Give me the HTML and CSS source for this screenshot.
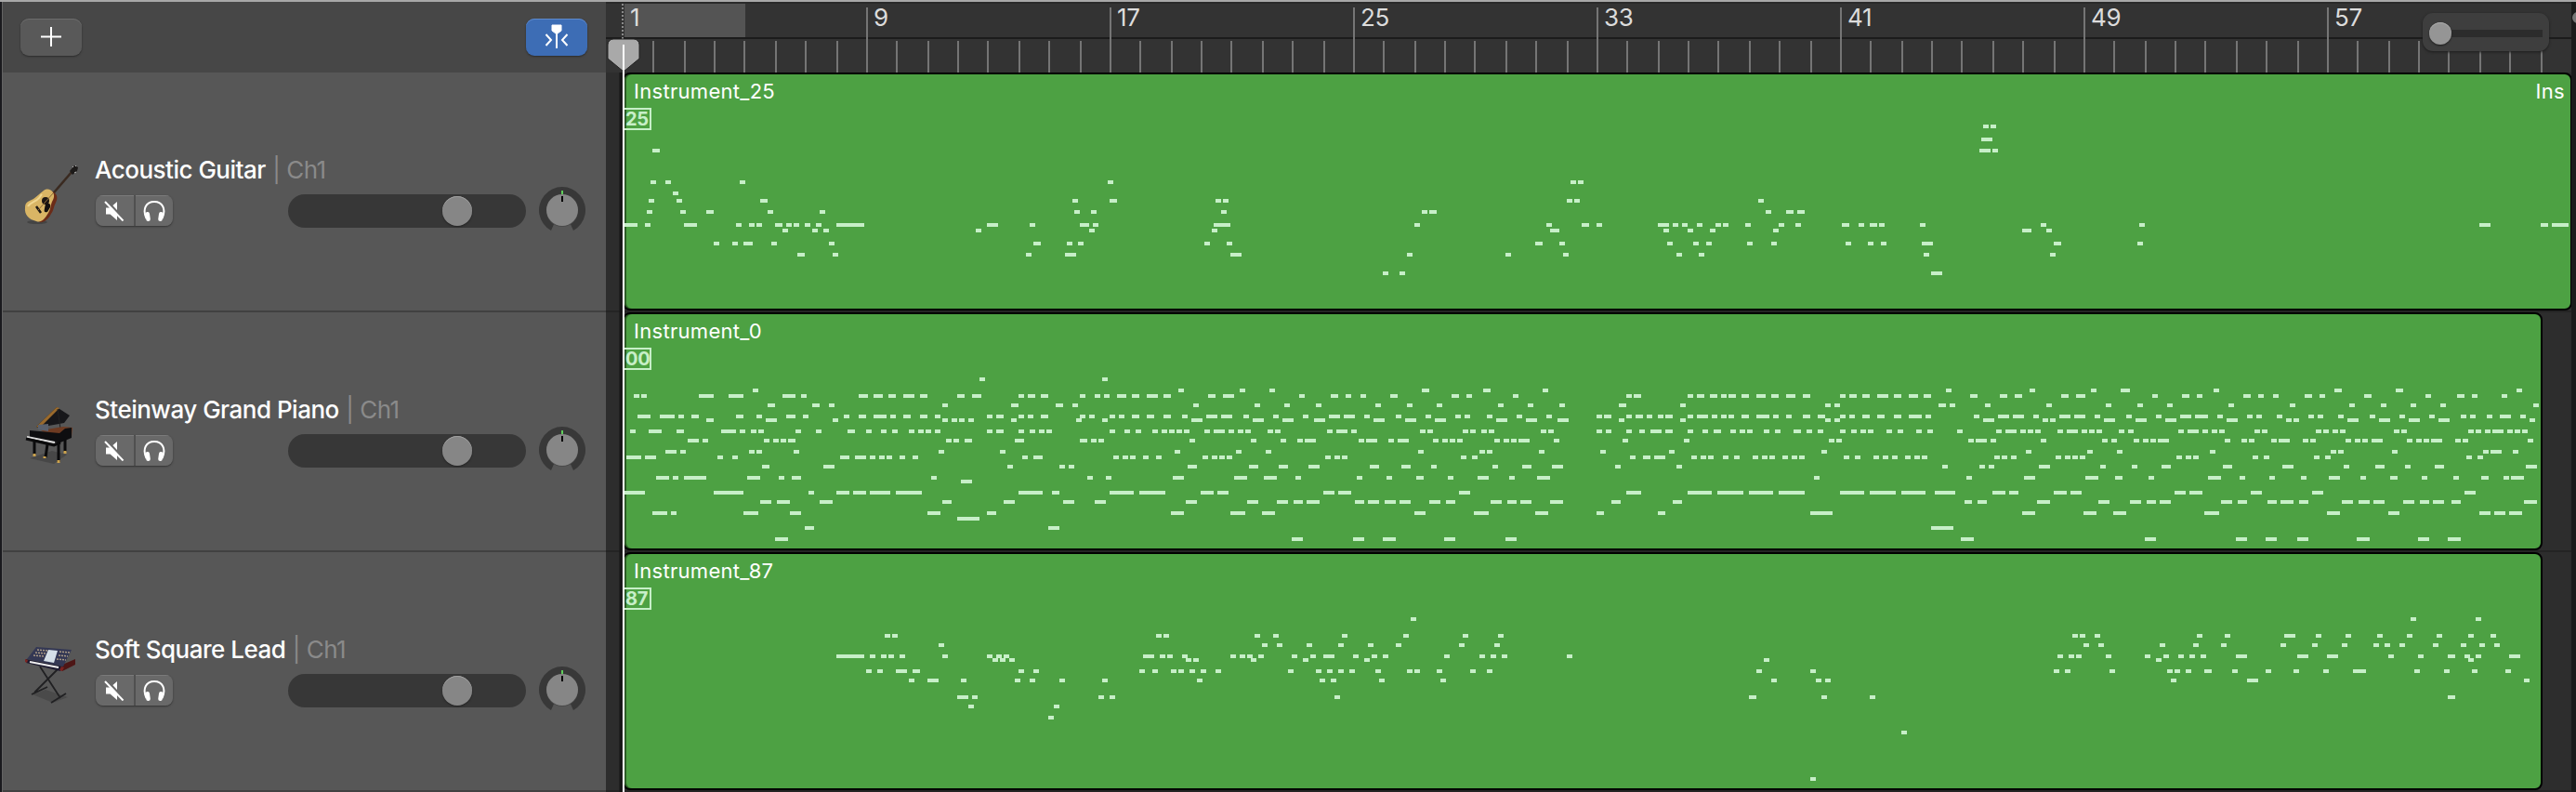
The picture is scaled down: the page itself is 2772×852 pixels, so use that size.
FILE: index.html
```html
<!DOCTYPE html>
<html lang="en">
    <head>
        <meta charset="UTF-8">
        <title>Tracks</title>
        <link rel="stylesheet" href="styles.css">
    </head>
    <body>
        <svg class="defs" width="0" height="0">
            <symbol id="mute" viewBox="0 0 22 22">
                <path d="M2 7.5h4.5L14 1v20l-7.500-6.500H2z" fill="#fff"/>
                <path d="M2.500-.5l19 20.500" stroke="#696969" stroke-width="2.500"/>
                <path d="M1 1l19.500 20.500" stroke="#fff" stroke-width="2"/>
            </symbol>
            <symbol id="phones" viewBox="0 0 24 24">
                <path d="M3.500 20C-1 10 3 2 12 2s13 8 8.500 18" fill="none" stroke="#fff" stroke-width="2"/>
                <rect x="2.800" y="13" width="4.600" height="10" rx="2.200" fill="#fff" transform="rotate(-8 5 18)"/>
                <rect x="16.600" y="13" width="4.600" height="10" rx="2.200" fill="#fff" transform="rotate(8 19 18)"/>
            </symbol>
            <symbol id="pan" viewBox="0 0 50 48">
                <path d="M13 47A25 25 0 1 1 37 47L33 38H17z" fill="#383838"/>
                <path d="M17 38h16l3 10H14z" fill="#575757"/>
                <circle cx="25" cy="26" r="17" fill="#4a4a4a"/>
                <circle cx="25" cy="25" r="17" fill="#868686"/>
                <path d="M25 4v4" stroke="#5fce5a" stroke-width="2"/>
                <path d="M25 10v6" stroke="#000" stroke-width="2"/>
            </symbol>
        </svg>
        <div class="app">
            <div class="panel">
                <div class="toolbar">
                    <button class="btn">
                        <svg width="22" height="22"><path d="M11 0v21M0 10.500h22" stroke="#fff" stroke-width="2"/></svg>
                    </button>
                    <button class="btn active">
                        <svg width="26" height="28" fill="none" stroke="#fff" stroke-width="2">
                            <path d="M8 1h10v6l-4 3h-2l-4-3z" fill="#fff" stroke-width="1"/>
                            <path d="M13 8v18M1.500 11l5.500 6-5.500 6M24.500 11L19 17l5.500 6"/>
                        </svg>
                    </button>
                </div>
                <div class="track">
                    <svg class="instrument" viewBox="0 0 64 70">
                        <ellipse cx="17" cy="64" rx="11" ry="2" fill="#444"/>
                        <path d="M30 38L55 9" stroke="#3a2a20" stroke-width="2.600"/>
                        <path d="M52 9l5-6 4 2-1 4-5 4z" fill="#1c1a19"/>
                        <path d="M55 5l1-1M58 3l1 1M57 11l2-1" stroke="#bbb"/>
                        <path d="M33 31c5 2 7 6 4 12s-2 8-5 12c-3 6-8 10-13 9z" fill="#6b2c18"/>
                        <path d="M24 30c4-3 8-1 10 2s1 7-1 10c-2 5-1 7-4 12-4 7-8 11-13 9C8 61 3 56 4 48c0-6 5-7 9-9 4-3 7-6 11-9z" fill="#d9b565"/>
                        <path d="M7 47c3-5 9-5 12-9l3-4" fill="none" stroke="#f0d792" stroke-width="2"/>
                        <circle cx="26" cy="41" r="4" fill="#1d1714"/>
                        <path d="M26 44c4-1 6 0 5 4l-3 5c-3 1-4 0-3-4z" fill="#15110f"/>
                        <path d="M16 47l5 7" stroke="#1d1714" stroke-width="2.500"/>
                        <path d="M18 51L34 33" stroke="#8c6a38"/>
                    </svg>
                    <div class="info">
                        <div class="name">Acoustic Guitar <span>| Ch1</span></div>
                        <div class="controls">
                            <div class="toggles">
                                <button><svg width="22" height="22"><use href="#mute"/></svg></button>
                                <button><svg width="24" height="24"><use href="#phones"/></svg></button>
                            </div>
                            <div class="volume"><i></i></div>
                            <svg class="pan" width="50" height="48"><use href="#pan"/></svg>
                        </div>
                    </div>
                </div>
                <div class="track">
                    <svg class="instrument" viewBox="0 0 64 70">
                        <path d="M9 60l24-8 16 4-14 10z" fill="#474747"/>
                        <path d="M16 26L38 5l14 9-6 8-28 5z" fill="#17171a"/>
                        <path d="M16 26L38 5l3 1-21 21z" fill="#9a6a2c"/>
                        <path d="M39 7l3 21" stroke="#222"/>
                        <path d="M21 30l24-4 10 1-1 10-12 3z" fill="#6e3b22"/>
                        <path d="M18 24l11-1v8l-11-2z" fill="#5b616d"/>
                        <path d="M9 30l32 3 6-5 7-1v11l-12 5-27-1-6-5z" fill="#0e0e10"/>
                        <path d="M6 37l30 6" stroke="#dcdcdc" stroke-width="2"/>
                        <path d="M5 39l30 7 7-3" stroke="#0a0a0b" stroke-width="3" fill="none"/>
                        <path d="M14 42v14M40 44v20M28 45l-2 14M47 40v13" stroke="#0b0b0c" stroke-width="3"/>
                        <path d="M14 55v3M40 62v3M25 58v2M47 52v3" stroke="#cba24d" stroke-width="3"/>
                    </svg>
                    <div class="info">
                        <div class="name">Steinway Grand Piano <span>| Ch1</span></div>
                        <div class="controls">
                            <div class="toggles">
                                <button><svg width="22" height="22"><use href="#mute"/></svg></button>
                                <button><svg width="24" height="24"><use href="#phones"/></svg></button>
                            </div>
                            <div class="volume"><i></i></div>
                            <svg class="pan" width="50" height="48"><use href="#pan"/></svg>
                        </div>
                    </div>
                </div>
                <div class="track">
                    <svg class="instrument" viewBox="0 0 64 70">
                        <path d="M12 56l14-5 24 8-16 6z" fill="#4a4a4a"/>
                        <path d="M20 26l22 34M40 28L14 54M11 56l17-8M32 65l16-10" stroke="#202022" stroke-width="1.800" fill="none"/>
                        <path d="M44 24l14-6v6l-14 7z" fill="#4d1616"/>
                        <path d="M16 5l38 3-9 18-39-8z" fill="#343854"/>
                        <path d="M17 8l11 1M15 11l12 1M13 14l11 1M41 10l11 1M40 14l10 1M38 18l10 1" stroke="#a99a86" stroke-width="1.500" stroke-dasharray="2 1"/>
                        <path d="M29 8l10 1-4 13-11-2z" fill="#d5e0e8"/>
                        <path d="M5 18l40 8-3 5L5 22z" fill="#1d1b30"/>
                        <path d="M9 21l31 6" stroke="#eee" stroke-width="2"/>
                        <path d="M4 18l3 1-1 3-2-1zM43 26l3 1-2 4-3-1z" fill="#7c2320"/>
                    </svg>
                    <div class="info">
                        <div class="name">Soft Square Lead <span>| Ch1</span></div>
                        <div class="controls">
                            <div class="toggles">
                                <button><svg width="22" height="22"><use href="#mute"/></svg></button>
                                <button><svg width="24" height="24"><use href="#phones"/></svg></button>
                            </div>
                            <div class="volume"><i></i></div>
                            <svg class="pan" width="50" height="48"><use href="#pan"/></svg>
                        </div>
                    </div>
                </div>
            </div>
            <div class="timeline">
                <div class="ruler">
                    <div class="cycle"></div>
                    <svg id="ticks" width="2120" height="76"></svg>
                    <div class="numbers">
                        <span>1</span><span>9</span><span>17</span><span>25</span><span>33</span><span>41</span><span>49</span><span>57</span>
                    </div>
                    <div class="zoom"><i></i></div>
                </div>
                <div class="lane">
                    <div class="region long">
                        <div class="title"><span>Instrument_25</span><span class="loop">Ins</span></div>
                        <div class="patch">25</div>
                        <svg class="notes" id="guitar" viewBox="0 0 1047 126"></svg>
                    </div>
                </div>
                <div class="lane">
                    <div class="region">
                        <div class="title"><span>Instrument_0</span></div>
                        <div class="patch">00</div>
                        <svg class="notes" id="piano" viewBox="0 0 1047 126"></svg>
                    </div>
                </div>
                <div class="lane">
                    <div class="region">
                        <div class="title"><span>Instrument_87</span></div>
                        <div class="patch">87</div>
                        <svg class="notes" id="lead" viewBox="0 0 1047 126"></svg>
                    </div>
                </div>
                <div class="edge"><i></i></div>
                <svg class="playhead" width="38" height="850">
                    <path d="M18 2v40" stroke="#8a8a8a" stroke-width="2" stroke-dasharray="2 2"/>
                    <path d="M16 76v774" stroke="#161616" stroke-width="3"/>
                    <path d="M2 46a6 6 0 0 1 6-6h22a6 6 0 0 1 6 6v15L19 75 2 61z" fill="#a9a9a9" stroke="#222" stroke-width="1"/>
                    <path d="M19 46v804" stroke="#fff" stroke-width="2"/>
                </svg>
            </div>
        </div>
        <script src="script.js"></script>
    </body>
</html>
```
FILE: styles.css
```css
* {
    box-sizing: border-box;
}

body {
    margin: 0;
    background: #1a1a1e;
    font-family: Inter, "Liberation Sans", sans-serif;
    color: #fff;
    overflow: hidden;
}

button {
    border: 0;
    padding: 0;
    display: flex;
    align-items: center;
    justify-content: center;
}

.defs {
    position: absolute;
}

.app {
    display: flex;
    width: 2772px;
    height: 852px;
    border-top: 2px solid #a8a8a8;
    padding-left: 2px;
}

.panel {
    width: 650px;
    background: #575757;
    border-left: 1px solid #636363;
}

.toolbar {
    height: 76px;
    background: #474747;
    display: flex;
    justify-content: space-between;
    padding: 18px 20px 0 19px;
}

.btn {
    width: 66px;
    height: 40px;
    border-radius: 9px;
    background: #595959;
    box-shadow: inset 0 1px #6c6c6c, 0 1px 2px #2c2c2c;
}

.btn.active {
    background: #3d6db5;
    box-shadow: inset 0 1px #5f8acb, 0 1px 2px #2c2c2c;
}

.track {
    height: 258px;
    border-bottom: 2px solid #414141;
    display: flex;
    padding: 89px 22px 0 20px;
}

.instrument {
    width: 64px;
    height: 70px;
    margin: 8px 15px 0 0;
}

.info {
    flex: 1;
}

.name {
    font-size: 26px;
    line-height: 32px;
    font-weight: 500;
    letter-spacing: -0.5px;
    white-space: pre;
}

.name span {
    color: #8a8a8a;
    font-weight: 400;
    margin-left: 1px;
}

.controls {
    display: flex;
    align-items: center;
    margin-top: 2px;
    height: 48px;
}

.toggles {
    display: flex;
    width: 83px;
    height: 33px;
    gap: 2px;
    margin: 3px 0 0 1px;
    border-radius: 8px;
    overflow: hidden;
    background: #505050;
    box-shadow: 0 1px 2px #333;
}

.toggles button {
    flex: 1;
    background: #696969;
    box-shadow: inset 0 1px #7b7b7b;
}

.volume {
    width: 256px;
    height: 36px;
    margin: 3px 0 0 124px;
    border-radius: 18px;
    background: #373737;
    padding: 2px 58px 2px 166px;
}

.volume i {
    display: block;
    width: 32px;
    height: 32px;
    border-radius: 50%;
    background: #868686;
    box-shadow: inset 0 1px #a0a0a0, 0 1px 2px #222;
}

.pan {
    margin-left: 14px;
}

.timeline {
    position: relative;
    width: 2120px;
    background: #2d2d2d;
}

.ruler {
    position: relative;
    height: 76px;
    background: #333;
    border-top: 2px solid #2a2a2a;
}

.cycle {
    width: 130px;
    height: 36px;
    margin-left: 20px;
    background: #545454;
}

#ticks {
    position: absolute;
    top: -2px;
    left: 0;
}

.numbers {
    position: absolute;
    top: -1px;
    left: 26px;
    display: flex;
}

.numbers span {
    width: 262px;
    font-size: 26px;
    line-height: 32px;
    letter-spacing: -0.3px;
    color: #dcdcdc;
}

.zoom {
    position: absolute;
    top: 10px;
    left: 1955px;
    width: 136px;
    height: 41px;
    padding: 10px 7px;
    border-radius: 11px;
    background: linear-gradient(#2c2c2c, #2c2c2c) 10px 18px / 119px 8px no-repeat #3e3e3e;
    box-shadow: 0 1px 3px #1c1c1c;
}

.zoom i {
    display: block;
    width: 24px;
    height: 24px;
    border-radius: 50%;
    background: #959595;
    box-shadow: inset 0 1px #ababab, 0 1px 2px #1c1c1c;
}

.lane {
    height: 258px;
    padding-left: 18px;
    border-bottom: 2px solid #242424;
}

.region {
    position: relative;
    width: 2066px;
    height: 256px;
    border: 2px solid #000;
    border-radius: 8px;
    background: #4da143;
    box-shadow: inset 2px 0 #2c5c26;
    overflow: hidden;
}

.region.long {
    width: 2098px;
}

.title {
    display: flex;
    justify-content: space-between;
    padding: 4px 6px 0 10px;
    height: 36px;
    font-size: 22px;
    line-height: 28px;
    letter-spacing: 0.3px;
}

.patch {
    width: 29px;
    height: 24px;
    border: 2px solid #c7efc8;
    border-left: 0;
    font-size: 20px;
    line-height: 20px;
    font-weight: 700;
    letter-spacing: -0.3px;
    text-indent: 1px;
    color: #c7efc8;
}

.notes {
    position: absolute;
    top: 0;
    left: 0;
    width: 2094px;
    height: 252px;
    fill: #c7efc8;
    shape-rendering: crispEdges;
}

.edge {
    position: absolute;
    top: 0;
    right: 0;
    width: 5px;
    height: 850px;
    background: #1b1b1b;
    overflow: hidden;
}

.edge i {
    display: block;
    width: 12px;
    height: 12px;
    margin: 11px 0 0 1px;
    border-radius: 50%;
    background: #777;
}

.playhead {
    position: absolute;
    top: 0;
    left: 0;
}
```
FILE: script.js
```js
// one line per pitch, "y: x x+w ..." in points, width is 3 when left out
const guitar = `
27: 731 735
34: 730+6
40: 15+4 729+6 736
57: 14 22 62 260 509 513
63: 26
67: 13 28 73+4 241 261+4 318 322 507 511 610
73: 12 30 44+4 77 105 242 251 321 429 433+4 614 625+4 631+4
80: 0+7 11 32+7 60 67 71 81+4 87 91 97 103 114+15 195+6 218 245+5 252 317+9 425 496 515+4 523 556+6 564 569 577 587 591 603 621 630 655+4 664 670+4 675 697 762 815 998+6 1031+4 1037+9
83: 85 101 107 189 250 316 498+5 559 572 584 618 752+5 765
90: 48 58 64+5 79 110 220+4 238 244 312 324 490+4 503 561 575 582 604 617 657 669 676 698+6 769+4 814
96: 93+4 112 216 237+6 326+6 421 474 505 566 578 699 767
106: 408 417 703+6`;

const piano = `
34: 191 257
40: 69 298 331 347 429+4 462+4 494 711 756 789 805+5 855 920+4 953+4 1018
43: 5 9 40+8 56+8 85+7 95 126+5 134+5 142+4 150+6 159+4 179+4 187+5 212 217+4 224+4 245 253 258 265+5 273+4 281+6 290+4 314+4 322+6 363 380+4 388 396 412+4 445+4 453 478 539 543+4 572 577+4 584+4 590 594+4 601+4 609+5 617+4 625+5 634+4 654 659+4 666+4 674+6 683+4 691+5 699+4 724+4 740+4 748+4 773+4 781+5 822 838+4 846 871+4 879 887 904+4 912 936+4 969 986+4 994 1010
48: 77+4 101+4 110 171 208+4 232+4 241 306 339 355 372 404 421 437 470 486 503 535+4 568 646 651 707+4 713 732 765 797 814 830 863 896 928 945 961 977 1027
54: 7+7 19+8 29 36+4 60+4 71 87+5 96 118 126+4 134+7 143 150+4 159+4 167 195 200+4 212 217 224+4 245 250 261 266 273+4 281+4 290+4 300 313+6 321+6 333 349 365 379+6 387+6 398 415 431 447 452 464 480 496 523 527+4 539 544+4 550 556 560+4 572 577+6 585 590 594 601+4 609+7 618 625 634+4 642+4 654 659 666+4 674+4 683+4 691+7 700 726 739+6 747+6 758 772+6 780+6 791 808 824 837+6 845+7 857 873 878 889 906 911 922 939 955 971 988 993 1002 1009+6 1020
56: 44+4 76+6 112 171 176 180 185 208 243 257 305+6 338+6 354+6 371+6 403+6 420+6 436+6 469+6 485+6 502+6 535 568 646 651 731+6 763 767 796+6 813+6 829+6 862+6 894 898 927+6 944+6 960+6 976+6 1025
62: 3 13+7 28+4 52+8 62 68 72 92 103 120+4 130 138 144 153 158 162 167 195 200+4 212 218 223 227 261 269 275 284 289 293 297 301 312 317+6 325 330 334 346 350 378 383+6 391 428 432 451 455 461 465 493 497 523 528 539 546 552+6 560+4 572 580 586+4 595 600 604 613 619 629+4 636 642 654 660 665 669 679 685 695 701 717 738 743+6 751 755 759 771 776+6 784 788 792 804 809 836 841+6 849 854 858 877 881 910 914 919 923 952 956 992 996 1001 1005+6 1013 1017 1021
67: 34+6 42 75 80 84 88+4 173 177 183+4 210+5 245+4 251 255 304 337 353 362 366+6 395 399+6 411 416+6 435 440 444 448 468 473 477 481+6 500 537 570 648 652 723 727+6 735 762 795 800 812 817 821 825+6 861 870 874 886 890+6 903 907 926 931 935 940+6 959 964 968 972+6 985 989 1024
73: 22+6 30 67 71 91 169 202 296 329 345 427 460 464 492 525 562 644 754 787 803 853 918 922 951 1000 1004+6 1016
76: 1+8 11+6 50 58 116+5 124+6 132 137 141 148 155 214 220+5 263 268 272 279 286 311 316 320 324 377 382 386 450 456 541 548+4 554+6 574 579 583 591 597 607 612 616 623 628 632 656 662 672 677 682 689 694 698 737 741 746 770 775 779 783 835 840 844 876 882 909 915 991 997
81: 74+4 107+6 206 234 239 303+5 336+5 352+5 368+6 401+5 418+5 434 467 483+5 499+6 533 566 709 729 734 761+6 794 811 827+5 860+5 892+6 925 942+5 958 974+5 1023+6
87: 17+7 26 32+12 66+7 83 90+5 165 249 259 295+6 328+7 344+7 361 394 410 426+4 443 459+6 476 491+7 640 722 753+6 786+7 802+4 820 852+7 869 885 902 917+6 934 950+4 967 984 999+4 1011 1015+7
89: 181+6
95: 0+11 48+16 99 114+7 123+7 132+11 146+14 212+13 230+4 261+13 277+14 310+7 319+6 376+6 384+7 449+6 539+8 572+13 588+14 605+13 621+14 654+13 670+14 687+13 705+11 736+7 745+5 769+7 778+6 834+6 842+7 875+6 908+6 990+6
100: 73+6 82+7 105+7 171+5 204+6 236+6 253+6 302+6 335+6 351+6 360+5 367+7 393+5 400+6 409+6 417+6 433+6 442+5 466+6 475+5 482+6 498+7 531+5 564+5 721+4 728+5 760+7 793+6 810+6 819+5 826+6 859+6 868+5 884+5 891+7 901+5 924+6 933+6 941+6 957+6 966+5 973+6 983+5 1022+7
106: 15+8 25 64+8 89+6 163+7 195+5 294+7 326+8 343+7 425+6 457+8 490+7 523+4 556+4 638+12 752+7 785+7 801+7 850+8 916+7 949+6 998+6 1006+6 1014+7
109: 179+12
114: 97+5 228+6 703+12
120: 81+7 359+6 392+6 408+7 441+6 474+6 719+7 818+6 867+6 883+6 900+6 932+7 965+6 981+7`;

const lead = `
34: 423 961 996
43: 140 144 286 290 339 349 386 419 451 470 779 783 791 846 861 893+6 910 926 943 959 975 992 1004
48: 169 343 351 367 384 400 415 449 468 785 793 826 844 859 891 908 924 941 947 955 973 988 998 1006
54: 114+15 132 138 142 148 171 195 200 204 279+6 288 292 300 326 331 335 341 359 369 376+6 392 402 408 441 460 466 472 507 771 777 781 797 818 828 836 842 848 867+6 900+6 916+6 949 965 981+4 990 996 1014+6
56: 198 202 207 302 306 337 365 398 613 824 992
62: 130 136 146+6 155+4 212 220 277 284 294 298 304 310 318 357 372 378 384 390 404 421 425 437 455 464 609 638 769 775 799 830 834 840 850+4 865 883 898 914 930+7 963 979 994 1012
67: 153 163+6 181 210 218 234 257 308 374 380 406 439 617 641 646 832 873+6 1022
76: 179+6 187 255 261 382 605+4 644 670 981+4
81: 185 231
87: 228
95: 687
120: 638`;

function drawNotes(id, data) {
    let d = '';
    for (const line of data.trim().split('\n')) {
        const [y, notes] = line.split(': ');
        for (const note of notes.split(' ')) {
            const [x, w = 3] = note.split('+');
            d += `M${x} ${y}h${w}v2h-${w}z`;
        }
    }
    document.getElementById(id).innerHTML = `<path d="${d}"/>`;
}

function drawTicks() {
    let d = '';
    for (let bar = 1; bar < 64; bar++) {
        const x = Math.round(334.95 + bar * 16.375) * 2 - 652;
        const y = bar % 8 ? 42 : 6;
        d += `M${x} ${y}h2V76h-2z`;
    }
    document.getElementById('ticks').innerHTML =
        `<path d="M0 38h2120v2H0z" fill="#1c1c1c"/><path d="${d}" fill="#757575"/>`;
}

drawTicks();
drawNotes('guitar', guitar);
drawNotes('piano', piano);
drawNotes('lead', lead);
```
